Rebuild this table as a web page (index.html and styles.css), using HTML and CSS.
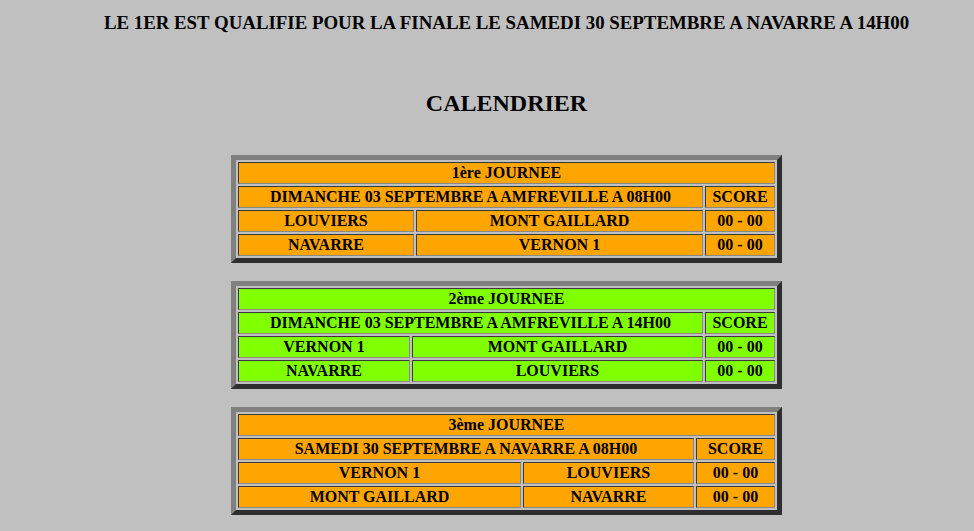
FILE: index.html
```html
<!DOCTYPE html>
<html lang="fr">
<head>
<meta charset="utf-8">
<title>Calendrier</title>
<link rel="stylesheet" href="styles.css">
</head>
<body>
<div class="page">
  <p class="notice">LE 1ER EST QUALIFIE POUR LA FINALE LE SAMEDI 30 SEPTEMBRE A NAVARRE A 14H00</p>
  <h2 class="title">CALENDRIER</h2>

  <table class="day orange">
    <colgroup><col class="c-a1"><col class="c-b1"><col class="c-s1"></colgroup>
    <tr><td colspan="3">1ère JOURNEE</td></tr>
    <tr><td colspan="2">DIMANCHE 03 SEPTEMBRE A AMFREVILLE A 08H00</td><td>SCORE</td></tr>
    <tr><td>LOUVIERS</td><td>MONT GAILLARD</td><td>00 - 00</td></tr>
    <tr><td>NAVARRE</td><td>VERNON 1</td><td>00 - 00</td></tr>
  </table>

  <table class="day green">
    <colgroup><col class="c-a2"><col class="c-b2"><col class="c-s2"></colgroup>
    <tr><td colspan="3">2ème JOURNEE</td></tr>
    <tr><td colspan="2">DIMANCHE 03 SEPTEMBRE A AMFREVILLE A 14H00</td><td>SCORE</td></tr>
    <tr><td>VERNON 1</td><td>MONT GAILLARD</td><td>00 - 00</td></tr>
    <tr><td>NAVARRE</td><td>LOUVIERS</td><td>00 - 00</td></tr>
  </table>

  <table class="day orange">
    <colgroup><col class="c-a3"><col class="c-b3"><col class="c-s3"></colgroup>
    <tr><td colspan="3">3ème JOURNEE</td></tr>
    <tr><td colspan="2">SAMEDI 30 SEPTEMBRE A NAVARRE A 08H00</td><td>SCORE</td></tr>
    <tr><td>VERNON 1</td><td>LOUVIERS</td><td>00 - 00</td></tr>
    <tr><td>MONT GAILLARD</td><td>NAVARRE</td><td>00 - 00</td></tr>
  </table>
</div>
</body>
</html>
```
FILE: styles.css
```css
html, body {
  background: #c0c0c0;
}
body {
  margin: 8px;
  font-family: "Liberation Serif", "Times New Roman", serif;
  color: #000;
}
.page {
  margin-left: 39px;
  display: flex;
  flex-direction: column;
  align-items: center;
}
.notice {
  margin: 4px 0 0;
  font-size: 18.85px;
  font-weight: bold;
  line-height: 22px;
}
.title {
  margin: 56px 0 0;
  font-size: 24px;
  line-height: 27px;
  font-weight: bold;
}
.day {
  width: 550px;
  table-layout: fixed;
  border-collapse: separate;
  border-spacing: 2px;
  border-width: 5px;
  border-style: solid;
  border-color: #808080 #2e2e2e #2e2e2e #808080;
  margin-bottom: 18px;
}
.day:first-of-type {
  margin-top: 38px;
}
.day td {
  height: 20px;
  padding: 0 1px;
  border: 1px solid;
  border-color: #3a3a3a #8a8a8a #8a8a8a #3a3a3a;
  text-align: center;
  font-size: 16px;
  font-weight: bold;
  line-height: 18px;
  white-space: nowrap;
  overflow: hidden;
}
.orange td { background: #ffa500; }
.green td { background: #80ff00; }

.c-a1 { width: 176px; }
.c-b1 { width: 287px; }
.c-s1 { width: 70px; }
.c-a2 { width: 172px; }
.c-b2 { width: 291px; }
.c-s2 { width: 70px; }
.c-a3 { width: 283px; }
.c-b3 { width: 171px; }
.c-s3 { width: 79px; }
```
